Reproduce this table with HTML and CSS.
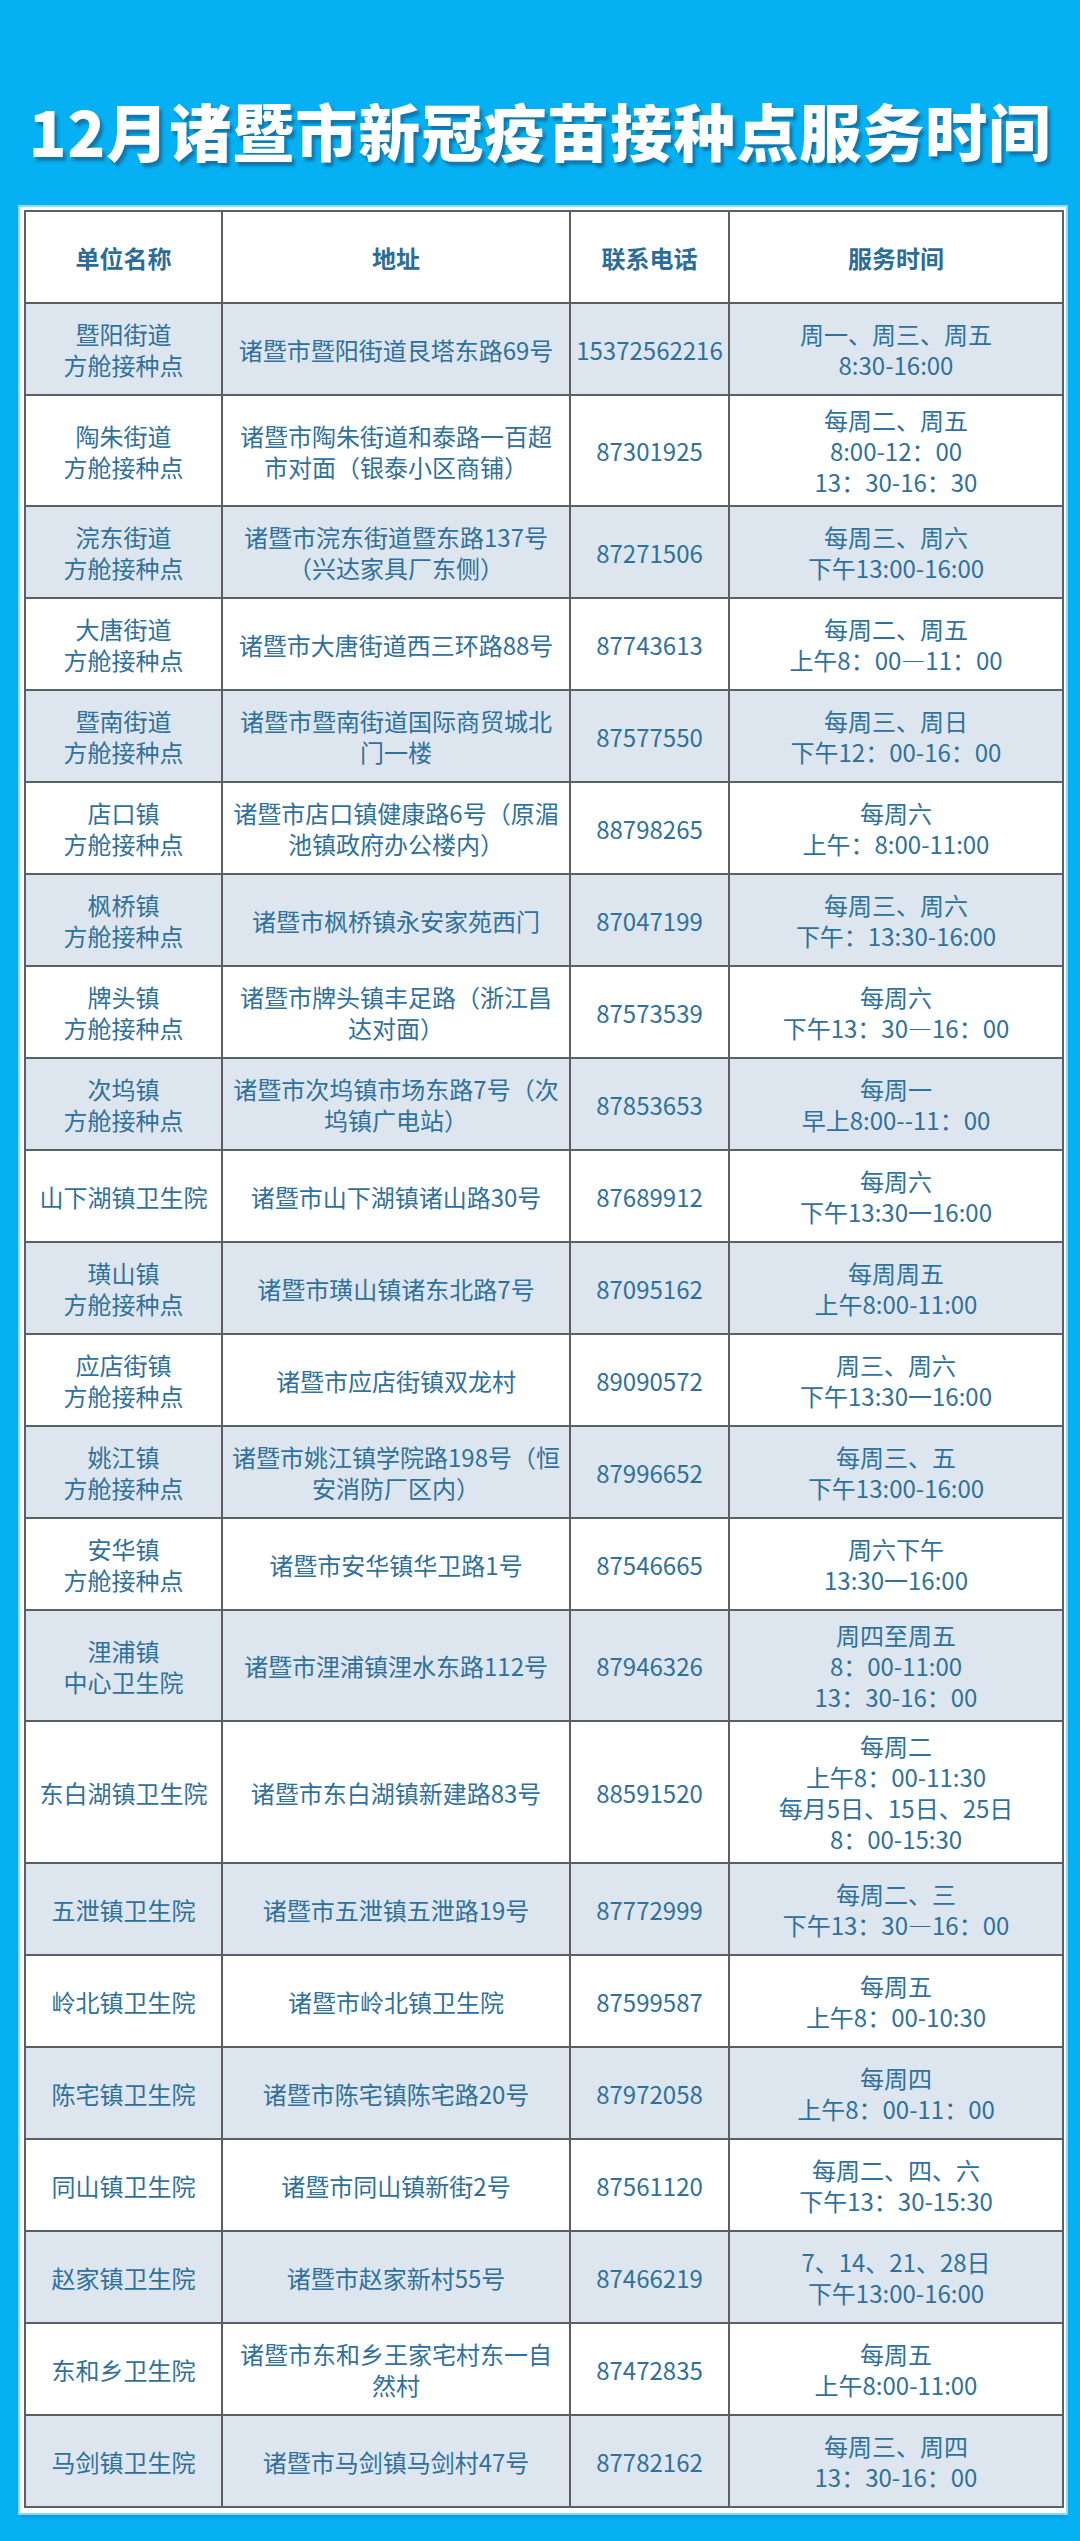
FILE: index.html
```html
<!DOCTYPE html>
<html lang="zh-CN">
<head>
<meta charset="utf-8">
<title>12月诸暨市新冠疫苗接种点服务时间</title>
<link rel="stylesheet" href="styles.css">
</head>
<body>
<div class="page">
  <h1 class="title">12月诸暨市新冠疫苗接种点服务时间</h1>
  <div class="board">
    <table class="grid">
      <colgroup>
        <col class="c-name"><col class="c-addr"><col class="c-tel"><col class="c-time">
      </colgroup>
      <thead>
        <tr><th>单位名称</th><th>地址</th><th>联系电话</th><th>服务时间</th></tr>
      </thead>
      <tbody>
        <tr><td>暨阳街道<br>方舱接种点</td><td>诸暨市暨阳街道艮塔东路69号</td><td>15372562216</td><td>周一、周三、周五<br>8:30-16:00</td></tr>
        <tr><td>陶朱街道<br>方舱接种点</td><td>诸暨市陶朱街道和泰路一百超<br>市对面（银泰小区商铺）</td><td>87301925</td><td>每周二、周五<br>8:00-12：00<br>13：30-16：30</td></tr>
        <tr><td>浣东街道<br>方舱接种点</td><td>诸暨市浣东街道暨东路137号<br>（兴达家具厂东侧）</td><td>87271506</td><td>每周三、周六<br>下午13:00-16:00</td></tr>
        <tr><td>大唐街道<br>方舱接种点</td><td>诸暨市大唐街道西三环路88号</td><td>87743613</td><td>每周二、周五<br>上午8：00—11：00</td></tr>
        <tr><td>暨南街道<br>方舱接种点</td><td>诸暨市暨南街道国际商贸城北<br>门一楼</td><td>87577550</td><td>每周三、周日<br>下午12：00-16：00</td></tr>
        <tr><td>店口镇<br>方舱接种点</td><td>诸暨市店口镇健康路6号（原湄<br>池镇政府办公楼内）</td><td>88798265</td><td>每周六<br>上午：8:00-11:00</td></tr>
        <tr><td>枫桥镇<br>方舱接种点</td><td>诸暨市枫桥镇永安家苑西门</td><td>87047199</td><td>每周三、周六<br>下午：13:30-16:00</td></tr>
        <tr><td>牌头镇<br>方舱接种点</td><td>诸暨市牌头镇丰足路（浙江昌<br>达对面）</td><td>87573539</td><td>每周六<br>下午13：30—16：00</td></tr>
        <tr><td>次坞镇<br>方舱接种点</td><td>诸暨市次坞镇市场东路7号（次<br>坞镇广电站）</td><td>87853653</td><td>每周一<br>早上8:00--11：00</td></tr>
        <tr><td>山下湖镇卫生院</td><td>诸暨市山下湖镇诸山路30号</td><td>87689912</td><td>每周六<br>下午13:30一16:00</td></tr>
        <tr><td>璜山镇<br>方舱接种点</td><td>诸暨市璜山镇诸东北路7号</td><td>87095162</td><td>每周周五<br>上午8:00-11:00</td></tr>
        <tr><td>应店街镇<br>方舱接种点</td><td>诸暨市应店街镇双龙村</td><td>89090572</td><td>周三、周六<br>下午13:30一16:00</td></tr>
        <tr><td>姚江镇<br>方舱接种点</td><td>诸暨市姚江镇学院路198号（恒<br>安消防厂区内）</td><td>87996652</td><td>每周三、五<br>下午13:00-16:00</td></tr>
        <tr><td>安华镇<br>方舱接种点</td><td>诸暨市安华镇华卫路1号</td><td>87546665</td><td>周六下午<br>13:30一16:00</td></tr>
        <tr><td>浬浦镇<br>中心卫生院</td><td>诸暨市浬浦镇浬水东路112号</td><td>87946326</td><td>周四至周五<br>8：00-11:00<br>13：30-16：00</td></tr>
        <tr><td>东白湖镇卫生院</td><td>诸暨市东白湖镇新建路83号</td><td>88591520</td><td>每周二<br>上午8：00-11:30<br>每月5日、15日、25日<br>8：00-15:30</td></tr>
        <tr><td>五泄镇卫生院</td><td>诸暨市五泄镇五泄路19号</td><td>87772999</td><td>每周二、三<br>下午13：30—16：00</td></tr>
        <tr><td>岭北镇卫生院</td><td>诸暨市岭北镇卫生院</td><td>87599587</td><td>每周五<br>上午8：00-10:30</td></tr>
        <tr><td>陈宅镇卫生院</td><td>诸暨市陈宅镇陈宅路20号</td><td>87972058</td><td>每周四<br>上午8：00-11：00</td></tr>
        <tr><td>同山镇卫生院</td><td>诸暨市同山镇新街2号</td><td>87561120</td><td>每周二、四、六<br>下午13：30-15:30</td></tr>
        <tr><td>赵家镇卫生院</td><td>诸暨市赵家新村55号</td><td>87466219</td><td>7、14、21、28日<br>下午13:00-16:00</td></tr>
        <tr><td>东和乡卫生院</td><td>诸暨市东和乡王家宅村东一自<br>然村</td><td>87472835</td><td>每周五<br>上午8:00-11:00</td></tr>
        <tr><td>马剑镇卫生院</td><td>诸暨市马剑镇马剑村47号</td><td>87782162</td><td>每周三、周四<br>13：30-16：00</td></tr>
      </tbody>
    </table>
  </div>
</div>
</body>
</html>
```

FILE: styles.css
```css
html, body {
  margin: 0;
  padding: 0;
}
body {
  background: #05b1f2;
  font-family: "Noto Sans CJK SC", "Noto Sans", sans-serif;
  color: #2f719c;
}
.page {
  width: 1080px;
  height: 2541px;
  box-sizing: border-box;
  padding: 90px 14px 0 20px;
}
.title {
  margin: 0 0 37px -6px;
  height: 80px;
  line-height: 80px;
  text-align: center;
  font-size: 62px;
  font-weight: 900;
  letter-spacing: 1px;
  color: #ffffff;
  text-shadow: 3px 4px 3px rgba(30, 70, 110, 0.55);
}
.board {
  background: #ffffff;
  padding: 3px 4px 5px 4px;
  box-shadow: 0 0 0 2px rgba(200, 240, 255, 0.7), 0 3px 4px rgba(0, 80, 130, 0.35);
}
.grid {
  width: 1038px;
  border-collapse: collapse;
  table-layout: fixed;
  font-size: 24px;
  line-height: 31px;
}
.c-name { width: 197px; }
.c-addr { width: 348px; }
.c-tel { width: 159px; }
.c-time { width: 334px; }
.grid th,
.grid td {
  border: 2px solid #5c5f63;
  text-align: center;
  vertical-align: middle;
  padding: 8px 4px;
  white-space: nowrap;
}
.grid tr {
  height: 92px;
}
.grid th {
  font-weight: 700;
  color: #2c6c98;
  background: #ffffff;
}
.grid tbody tr:nth-child(odd) td {
  background: #dde6ef;
}
.grid tbody tr:nth-child(even) td {
  background: #ffffff;
}
```
